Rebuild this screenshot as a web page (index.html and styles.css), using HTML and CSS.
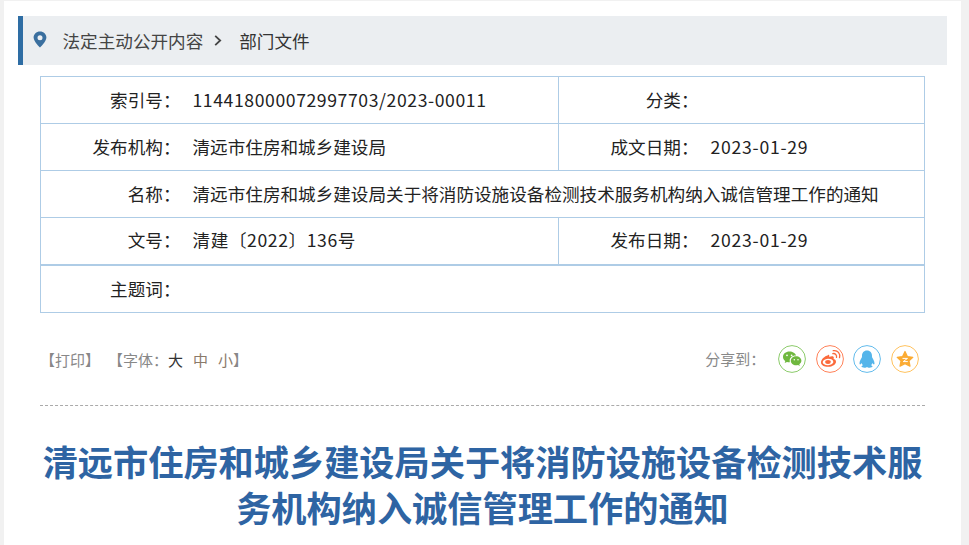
FILE: index.html
```html
<!DOCTYPE html>
<html lang="zh-CN">
<head>
<meta charset="utf-8">
<title>清远市住房和城乡建设局关于将消防设施设备检测技术服务机构纳入诚信管理工作的通知</title>
<link rel="stylesheet" href="styles.css">
</head>
<body>
<div class="page">
  <nav class="crumb">
    <svg class="pin" viewBox="0 0 14 17" width="14" height="17"><path fill-rule="evenodd" d="M7 0.5C3.3 0.5 0.6 3.2 0.6 6.6 0.6 10.6 7 16.6 7 16.6S13.4 10.6 13.4 6.6C13.4 3.2 10.7 0.5 7 0.5ZM7 4.2a2.5 2.5 0 1 1 0 5 2.5 2.5 0 0 1 0-5Z"/></svg>
    <a class="crumb-link">法定主动公开内容</a>
    <svg class="chev" viewBox="0 0 8 11" width="8" height="11"><path d="M1.2 0.8 6.2 5.5 1.2 10.2" fill="none" stroke="#444" stroke-width="1.8"/></svg>
    <a class="crumb-cur">部门文件</a>
  </nav>

  <div class="content">
    <table class="meta">
      <colgroup><col class="c1"><col class="c2"><col class="c3"><col class="c4"></colgroup>
      <tr><td class="lab">索引号：</td><td class="val num">114418000072997703/2023-00011</td><td class="lab">分类：</td><td class="val"></td></tr>
      <tr><td class="lab">发布机构：</td><td class="val">清远市住房和城乡建设局</td><td class="lab">成文日期：</td><td class="val date">2023-01-29</td></tr>
      <tr><td class="lab">名称：</td><td class="val" colspan="3">清远市住房和城乡建设局关于将消防设施设备检测技术服务机构纳入诚信管理工作的通知</td></tr>
      <tr class="thick"><td class="lab">文号：</td><td class="val num">清建〔2022〕136号</td><td class="lab">发布日期：</td><td class="val date">2023-01-29</td></tr>
      <tr class="last"><td class="lab">主题词：</td><td class="val" colspan="3"></td></tr>
    </table>

    <div class="tools">
      <div class="tools-left">
        <span>【打印】</span>
        <span class="font-group">【字体：</span><span class="size cur">大</span><span class="size">中</span><span class="size">小</span><span>】</span>
      </div>
      <div class="share">
        <span class="share-label">分享到：</span>
        <svg class="ico wx" viewBox="0 0 28 28" width="28" height="28">
          <circle cx="14" cy="14" r="13.4" fill="none" stroke="#8ccb6b"/>
          <path fill="#6fb83f" d="M11.4 6.600C7.800 6.600 5 9 5 12c0 1.700.9 3.100 2.300 4.100l-.6 2 2.300-1.200c.8.2 1.500.3 2.400.3h.5c-.2-.5-.2-1-.2-1.500 0-2.900 2.600-5.100 5.900-5.100h.5C17.500 8.300 14.700 6.600 11.400 6.600Z"/>
          <path fill="#6fb83f" d="M23.400 15.700c0-2.500-2.400-4.500-5.300-4.500s-5.300 2-5.300 4.500 2.400 4.500 5.300 4.500c.6 0 1.300-.1 1.900-.3l1.800 1-.5-1.600c1.200-.9 2.100-2.200 2.100-3.600Z"/>
          <circle cx="9" cy="10.300" r=".9" fill="#fff"/><circle cx="13.600" cy="10.300" r=".9" fill="#fff"/>
          <circle cx="16.300" cy="14.700" r=".75" fill="#fff"/><circle cx="20" cy="14.700" r=".75" fill="#fff"/>
        </svg>
        <svg class="ico wb" viewBox="0 0 28 28" width="28" height="28">
          <circle cx="14" cy="14" r="13.4" fill="none" stroke="#ff8259"/>
          <path fill="#fb6a3c" fill-rule="evenodd" d="M12 10.200c-3.500 1-7 4.200-7 7.200 0 2.700 3.300 4.400 7 4.400 4.700 0 8-2.700 8-5.100 0-1.600-1.500-2.300-2.500-2.600.5-1.100.4-2.100-.3-2.500-1-.6-2.900 0-3.900.5.300-1.300-.1-2.800-1.300-2.400ZM11.800 13.800c3-.2 5.400 1.100 5.500 2.900.1 1.800-2.200 3.300-5.100 3.500-3 .2-5.400-1.100-5.500-2.900-.1-1.800 2.200-3.300 5.100-3.500Z"/>
          <ellipse cx="12" cy="17" rx="2.800" ry="1.900" fill="#fb6a3c"/>
          <path d="M16.800 8.600c2.400-.5 4.300 1.500 3.700 3.800M17.200 5.700c4.500-.9 7.500 3 6.300 7" fill="none" stroke="#fb6a3c" stroke-width="1.300" stroke-linecap="round"/>
        </svg>
        <svg class="ico qq" viewBox="0 0 28 28" width="28" height="28">
          <circle cx="14" cy="14" r="13.400" fill="none" stroke="#62bbec"/>
          <path fill="#55b5ea" d="M14 5.600c-3.300 0-5 2.500-5 5.300 0 .7 0 1.100-.2 1.500-.9 1.400-2.300 3.800-2.300 5.800 0 1.200.5 1.400 1 1 .4-.3.8-.8 1-1.200.3 1 .9 1.800 1.500 2.300-.9.300-1.500.8-1.500 1.300 0 .8 1.500 1.100 3 1.100 1.200 0 2.100-.3 2.500-.7.400.4 1.300.7 2.500.7 1.500 0 3-.3 3-1.100 0-.5-.6-1-1.500-1.300.6-.5 1.200-1.300 1.500-2.300.2.400.6.900 1 1.200.5.400 1 .2 1-1 0-2-1.400-4.400-2.300-5.800-.2-.4-.2-.8-.2-1.500 0-2.800-1.700-5.300-5-5.300Z"/>
        </svg>
        <svg class="ico qz" viewBox="0 0 28 28" width="28" height="28">
          <circle cx="14" cy="14" r="13.400" fill="none" stroke="#ffc25e"/>
          <path fill="#fbab33" stroke="#fbab33" stroke-width="1.200" stroke-linejoin="round" d="M14 6.500l2.400 5 5.400.8-3.800 3.600 1 5.300-5-2.600-5 2.600 1-5.300-3.800-3.600 5.400-.8Z"/>
          <path d="M11.500 13.400h5l-4.300 3.200h4.600" fill="none" stroke="#fff" stroke-width="1"/>
        </svg>
      </div>
    </div>

    <h1 class="title">清远市住房和城乡建设局关于将消防设施设备检测技术服务机构纳入诚信管理工作的通知</h1>
  </div>
</div>
</body>
</html>
```

FILE: styles.css
```css
* { box-sizing: border-box; }
html, body { margin: 0; padding: 0; height: 545px; overflow: hidden; }
body {
  background: #f1f1f1;
  font-family: "Microsoft YaHei", "Noto Sans CJK SC", "Noto Sans", sans-serif;
  font-size: 17.6px;
  color: #222;
}
.page {
  margin: 1px 8px 0 4px;
  height: 544px;
  background: #fff;
  padding: 15px 14px 0;
}
.crumb {
  display: flex;
  align-items: center;
  height: 49px;
  background: #ebeef1;
  border-left: 5px solid #2e6da4;
  padding-left: 10px;
  line-height: 49px;
}
.pin { fill: #3a6f9f; flex: none; margin-bottom: 3px; }
.crumb-link { margin-left: 15.500px; color: #444; }
.chev { flex: none; margin-left: 11px; }
.crumb-cur { margin-left: 17px; color: #333; }

.content { margin: 11px 22px 0; }
.meta {
  width: 884px;
  table-layout: fixed;
  border-collapse: collapse;
}
.c1 { width: 141px; }
.c2 { width: 377px; }
.c3 { width: 141px; }
.c4 { width: 225px; }
.meta td {
  height: 47px;
  padding: 0 0 2px;
  border: 1px solid #aecce6;
  white-space: nowrap;
}
.meta .lab { text-align: right; border-right: 0; padding-right: 1px; }
.meta .val { padding-left: 11px; border-left: 0; }
.meta .num { letter-spacing: .6px; }
.meta .date { letter-spacing: .75px; }
.meta td:nth-child(2):not([colspan]) { border-right: 1px solid #aecce6; }
.meta .thick td { border-bottom: 2px solid #aecce6; }
.meta .last td { height: 48px; padding-bottom: 0; }

.tools {
  display: flex;
  justify-content: space-between;
  align-items: center;
  height: 93px;
  padding: 1px 6px 0 0;
  border-bottom: 1px dashed #aaa;
  font-size: 15px;
  color: #888;
}
.tools-left { display: flex; }
.font-group { margin-left: 8px; }
.size { margin-left: 10px; color: #8a7a6a; }
.size.cur { color: #333; margin-left: 0; }
.share { display: flex; align-items: center; margin-bottom: 2px; }
.share-label { margin-right: 3px; }
.ico { flex: none; margin-left: 9.700px; }

.title {
  margin: 31.500px 0 0;
  text-align: center;
  font-size: 35.200px;
  line-height: 46px;
  font-weight: 700;
  color: #2e64a3;
}
```
